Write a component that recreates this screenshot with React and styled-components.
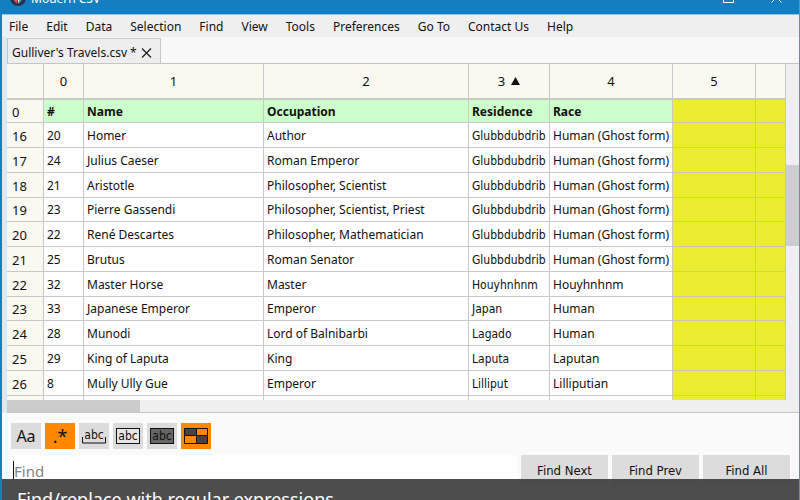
import React from "react";
import styled, { createGlobalStyle } from "styled-components";

const UI_FONT = `"Noto Sans", "Open Sans", sans-serif`;
const NARROW_FONT = `"DejaVu Sans Condensed", "DejaVu Sans", sans-serif`;

const GlobalStyle = createGlobalStyle`
  *, *::before, *::after { box-sizing: border-box; }
  body { margin: 0; overflow: hidden; background: #fbfbfb; font-family: ${UI_FONT}; color: #111; }
  button, input { font: inherit; color: inherit; }
`;

const Window = styled.div`
  position: relative;
  display: flex;
  flex-direction: column;
  height: 100vh;
  overflow: hidden;
  border-left: 2px solid #167fc0;
  border-right: 1px solid #3f9ccf;
  background: #fafafa;
`;

const TitleBar = styled.header`
  display: flex;
  flex: none;
  align-items: flex-end;
  height: 15px;
  padding: 0 17px 0 8px;
  overflow: hidden;
  background: #137fc0;
  border-bottom: 1px solid #8cc4e3;
  color: #fff;
`;

const Title = styled.span`
  flex: 1;
  padding: 0 0 6px 5px;
  font-size: 12px;
  line-height: 18px;
`;

const TitleIcon = styled.svg`
  flex: none;
  width: ${(p) => p.$size}px;
  height: ${(p) => p.$size}px;
  margin-bottom: ${(p) => p.$lift}px;
  fill: none;
  stroke: #fff;
`;

const WindowButton = styled.button`
  display: flex;
  align-items: flex-end;
  padding: 0;
  margin-left: ${(p) => p.$gap}px;
  border: 0;
  background: none;
`;

const MenuBar = styled.nav`
  display: flex;
  flex: none;
  gap: 18px;
  height: 22px;
  padding: 0 7px;
  background: #efefef;
`;

const MenuItem = styled.button`
  padding: 0;
  border: 0;
  background: none;
  font-size: 12px;
  line-height: 23px;
`;

const Workspace = styled.main`
  flex: none;
  padding-left: 5px;
  background: #e6e6e6;
`;

const TabStrip = styled.div`
  display: flex;
  align-items: flex-end;
  height: 27px;
  background: #f8f8f8;
  border-bottom: 1px solid #c6c6c6;
`;

const Tab = styled.div`
  display: flex;
  align-items: center;
  gap: 4px;
  height: 25px;
  padding: 3px 8px 0 4px;
  border: 1px solid #c6c6c6;
  border-bottom: 0;
  background: #eee;
  font-size: 12px;
`;

const CloseTab = styled.button`
  display: flex;
  padding: 0;
  border: 0;
  background: none;
`;

const SheetArea = styled.div`
  display: flex;
  height: 336px;
`;

const SheetView = styled.div`
  flex: 1;
  overflow: hidden;
  background: #fefefe;
`;

const Sheet = styled.table`
  width: 100%;
  table-layout: fixed;
  border-collapse: separate;
  border-spacing: 0;
  font-size: 12px;
  line-height: 18px;
`;

const Column = styled.col`
  width: ${(p) => (p.$width ? `${p.$width}px` : "auto")};
`;

const ColumnHead = styled.th`
  height: 36px;
  padding: 0;
  border-right: 1px solid #c9c9c9;
  border-bottom: 2px solid #c9c9c9;
  background: #f9f9f0;
  font-size: 13px;
  font-weight: 400;
`;

const SortMark = styled.svg`
  width: 9px;
  height: 8px;
  margin: 0 0 1px 6px;
`;

const Row = styled.tr`
  height: 25px;
  &:nth-child(4n + 1) { height: 24px; }
  &:first-child { height: 23px; }
`;

const RowHead = styled.th`
  padding: 1px 0 0 5px;
  border-right: 1px solid #c9c9c9;
  border-bottom: 1px solid #c9c9c9;
  background: #f9f9f0;
  font-size: 13px;
  font-weight: 400;
  text-align: left;
`;

const Cell = styled.td`
  padding: 1px 0 0 3px;
  overflow: hidden;
  border-right: 1px solid ${(p) => (p.$found ? "#c8c4bc" : "#c9c9c9")};
  border-bottom: 1px solid ${(p) => (p.$found ? "#c8c4bc" : "#c9c9c9")};
  background: ${(p) => (p.$found ? "#eded30" : p.$heading ? "#ccffcc" : "#fefefe")};
  font-family: ${(p) => (p.$narrow ? NARROW_FONT : UI_FONT)};
  font-weight: ${(p) => (p.$heading ? 700 : 400)};
  white-space: nowrap;
`;

const VerticalScroll = styled.div`
  flex: none;
  width: 13px;
  padding-top: 101px;
  background: #efefef;
`;

const VerticalThumb = styled.div`
  height: 81px;
  background: #cdcdcd;
`;

const HorizontalScroll = styled.div`
  height: 13px;
  border-bottom: 1px solid #c6c6c6;
  background: #efefef;
`;

const HorizontalThumb = styled.div`
  width: 133px;
  height: 12px;
  background: #cbcbcb;
`;

const FindPanel = styled.form`
  display: flex;
  flex-direction: column;
  gap: 6px;
  padding: 10px 9px 0;
`;

const Options = styled.div`
  display: flex;
  gap: 4px;
`;

const Option = styled.button`
  display: flex;
  align-items: center;
  justify-content: center;
  width: 30px;
  height: 26px;
  padding: 0;
  border: 0;
  background: ${(p) => (p.$on ? "#ff8800" : "#dcdcdc")};
  font-size: ${(p) => p.$size || 12}px;
  line-height: 16px;
`;

const Glyph = styled.svg`
  display: block;
  overflow: visible;
  font-family: ${NARROW_FONT};
`;

const FindRow = styled.div`
  display: flex;
  gap: 4px;
`;

const FindField = styled.div`
  display: flex;
  flex: 1;
  align-items: center;
  min-width: 0;
  height: 32px;
  padding-left: 2px;
  background: #fefefe;
`;

const Caret = styled.span`
  width: 1px;
  height: 20px;
  background: #111;
`;

const FindInput = styled.input`
  flex: 1;
  min-width: 0;
  height: 32px;
  padding: 0;
  border: 0;
  outline: 0;
  background: transparent;
  font-size: 15px;
  &::placeholder { color: #848484; opacity: 1; }
`;

const FindButton = styled.button`
  width: 87px;
  height: 30px;
  padding: 0;
  border: 0;
  background: #dcdcdc;
  font-family: ${NARROW_FONT};
  font-size: 13px;
`;

const Caption = styled.div`
  position: absolute;
  right: 0;
  bottom: 0;
  left: 0;
  height: 21px;
  padding: 8px 15px 0;
  overflow: hidden;
  background: rgba(64, 64, 64, 0.93);
  color: #fff;
  font-size: 18px;
  line-height: 24px;
  white-space: nowrap;
`;

const menus = ["File", "Edit", "Data", "Selection", "Find", "View", "Tools", "Preferences", "Go To", "Contact Us", "Help"];
const widths = [37, 40, 180, 205, 81, 123, 83, 0];
const columns = ["0", "1", "2", "3", "4", "5", ""];
const RESIDENCE = 3;
const ghost = "Human (Ghost form)";
const rows = [
  ["0", "#", "Name", "Occupation", "Residence", "Race"],
  ["16", "20", "Homer", "Author", "Glubbdubdrib", ghost],
  ["17", "24", "Julius Caeser", "Roman Emperor", "Glubbdubdrib", ghost],
  ["18", "21", "Aristotle", "Philosopher, Scientist", "Glubbdubdrib", ghost],
  ["19", "23", "Pierre Gassendi", "Philosopher, Scientist, Priest", "Glubbdubdrib", ghost],
  ["20", "22", "René Descartes", "Philosopher, Mathematician", "Glubbdubdrib", ghost],
  ["21", "25", "Brutus", "Roman Senator", "Glubbdubdrib", ghost],
  ["22", "32", "Master Horse", "Master", "Houyhnhnm", "Houyhnhnm"],
  ["23", "33", "Japanese Emperor", "Emperor", "Japan", "Human"],
  ["24", "28", "Munodi", "Lord of Balnibarbi", "Lagado", "Human"],
  ["25", "29", "King of Laputa", "King", "Laputa", "Laputan"],
  ["26", "8", "Mully Ully Gue", "Emperor", "Lilliput", "Lilliputian"],
  ["", "", "", "", "", ""],
];

function AbcGlyph({ variant }) {
  return (
    <Glyph width="24" height="18" viewBox="0 0 24 18">
      {variant === "word" && <path d="M.5 10v6h23v-6" fill="none" stroke="#111" />}
      {variant !== "word" && (
        <rect x=".5" y="1.500" width="23" height="15" fill={variant === "filled" ? "#666" : "#e6e6e6"} stroke="#111" />
      )}
      <text x="12" y={variant === "word" ? 12 : 13} textAnchor="middle" fontSize="12" fill="#111">abc</text>
    </Glyph>
  );
}

function SelectionGlyph() {
  return (
    <Glyph width="24" height="16" viewBox="0 0 24 16">
      <path d="M.5.5h12v7H.5zM12.500 7.500h11v8h-11z" fill="#444" />
      <path d="M.5.5h23v15H.5zM.5 7.500h23M12.500.5v15" fill="none" stroke="#111" />
    </Glyph>
  );
}

export default function App() {
  return (
    <>
      <GlobalStyle />
      <Window>
        <TitleBar>
          <TitleIcon $size={16} $lift={8} viewBox="0 0 16 16" aria-hidden="true">
            <circle cx="8" cy="8" r="8" fill="#25314f" stroke="none" />
            <path d="M3 6c0 5 3 6 4 8L8 4z" fill="#e2584c" stroke="none" />
            <path d="M8 3l3 4-3 7z" fill="#e9eef2" stroke="none" />
            <path d="M12 5c1 4-1 7-4 9l3-7z" fill="#3aa0a0" stroke="none" />
          </TitleIcon>
          <Title>Modern CSV</Title>
          <WindowButton type="button" aria-label="Maximize" $gap={0}>
            <TitleIcon $size={11} $lift={11} viewBox="0 0 11 11"><path d="M.5.5h10v10H.5z" /></TitleIcon>
          </WindowButton>
          <WindowButton type="button" aria-label="Close" $gap={37}>
            <TitleIcon $size={11} $lift={11} viewBox="0 0 11 11"><path d="M.5.5l10 10M10.500.5l-10 10" /></TitleIcon>
          </WindowButton>
        </TitleBar>
        <MenuBar>
          {menus.map((name) => <MenuItem type="button" key={name}>{name}</MenuItem>)}
        </MenuBar>
        <Workspace>
          <TabStrip>
            <Tab>
              Gulliver's Travels.csv *
              <CloseTab type="button" aria-label="Close tab">
                <svg width="11" height="10" viewBox="0 0 11 10" stroke="#222" strokeWidth="1.300"><path d="M1 .5l9 9M10 .5l-9 9" /></svg>
              </CloseTab>
            </Tab>
          </TabStrip>
          <SheetArea>
            <SheetView>
              <Sheet>
                <colgroup>{widths.map((w, i) => <Column key={i} $width={w} />)}</colgroup>
                <thead>
                  <tr>
                    <ColumnHead />
                    {columns.map((c, i) => (
                      <ColumnHead scope="col" key={i}>
                        {c}
                        {c === "3" && <SortMark viewBox="0 0 9 8"><path d="M4.500 0L9 8H0z" fill="#111" /></SortMark>}
                      </ColumnHead>
                    ))}
                  </tr>
                </thead>
                <tbody>
                  {rows.map(([id, ...cells], r) => (
                    <Row key={r}>
                      <RowHead scope="row">{id}</RowHead>
                      {cells.map((text, c) => (
                        <Cell key={c} $heading={r === 0} $narrow={r > 0 && c === RESIDENCE}>{text}</Cell>
                      ))}
                      <Cell $found />
                      <Cell $found />
                    </Row>
                  ))}
                </tbody>
              </Sheet>
            </SheetView>
            <VerticalScroll><VerticalThumb /></VerticalScroll>
          </SheetArea>
          <HorizontalScroll><HorizontalThumb /></HorizontalScroll>
        </Workspace>
        <FindPanel onSubmit={(e) => e.preventDefault()}>
          <Options>
            <Option type="button" aria-label="Match case" $size={16}>Aa</Option>
            <Option type="button" aria-label="Regular expression" $on $size={18}>.*</Option>
            <Option type="button" aria-label="Whole word"><AbcGlyph variant="word" /></Option>
            <Option type="button" aria-label="Whole cell"><AbcGlyph variant="cell" /></Option>
            <Option type="button" aria-label="Highlight matches"><AbcGlyph variant="filled" /></Option>
            <Option type="button" aria-label="In selection" $on><SelectionGlyph /></Option>
          </Options>
          <FindRow>
            <FindField>
              <Caret />
              <FindInput aria-label="Find" placeholder="Find" />
            </FindField>
            <FindButton type="submit">Find Next</FindButton>
            <FindButton type="button">Find Prev</FindButton>
            <FindButton type="button">Find All</FindButton>
          </FindRow>
        </FindPanel>
        <Caption>Find/replace with regular expressions</Caption>
      </Window>
    </>
  );
}
